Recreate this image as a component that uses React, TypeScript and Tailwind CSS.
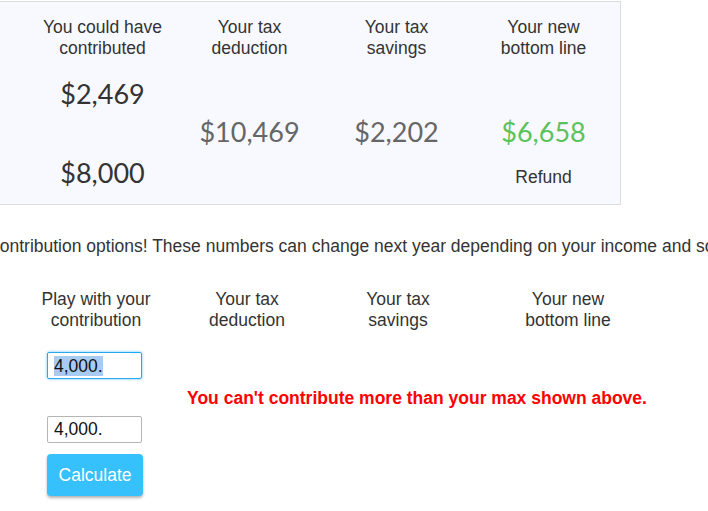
import React from 'react';

const summary = [
  { label: ['You could have', 'contributed'] },
  { label: ['Your tax', 'deduction'], value: '$10,469' },
  { label: ['Your tax', 'savings'], value: '$2,202' },
  { label: ['Your new', 'bottom line'] },
];

const playHeaders = [
  { label: ['Play with your', 'contribution'], w: 'w-[152px]' },
  { label: ['Your tax', 'deduction'], w: 'w-[150px]' },
  { label: ['Your tax', 'savings'], w: 'w-[152px]' },
  { label: ['Your new', 'bottom line'], w: 'w-[188px]' },
];

const Label: React.FC<{ lines: string[] }> = ({ lines }) => (
  <div className="text-center text-[17.5px] leading-[21px] text-[#333]">
    {lines.map((l) => (
      <div key={l} className="whitespace-nowrap">{l}</div>
    ))}
  </div>
);

const money = "font-['Lato',sans-serif] text-[27px] leading-[34px] text-center";

const App: React.FC = () => {
  return (
    <div className="w-[708px] h-[511px] overflow-hidden bg-white font-['Liberation_Sans',Arial,sans-serif] pt-px">
      {/* Summary panel */}
      <div className="-ml-[20px] w-[641px] border border-[#dcdcdc] bg-[#f8f9fe] pl-[48px] pr-[3px] pt-[15px] pb-[14px]">
        <div className="flex">
          {summary.map((col, i) => (
            <div key={i} className="w-[147px] flex flex-col">
              <Label lines={col.label} />
              <div className="mt-[18px] h-[113px] flex flex-col">
                {i === 0 && (
                  <div className="flex flex-col justify-between h-full">
                    <div className={`${money} text-[#333]`}>$2,469</div>
                    <div className={`${money} text-[#333]`}>$8,000</div>
                  </div>
                )}
                {(i === 1 || i === 2) && (
                  <div className={`${money} text-[#666] pt-[38px]`}>{col.value}</div>
                )}
                {i === 3 && (
                  <div className="pt-[38px] flex flex-col items-center">
                    <div className={`${money} text-[#5cc35c]`}>$6,658</div>
                    <div className="mt-[18px] text-[17.5px] leading-[21px] text-[#333]">Refund</div>
                  </div>
                )}
              </div>
            </div>
          ))}
        </div>
      </div>

      {/* Note, clipped by the viewport on both sides */}
      <p className="mt-[31px] -ml-[9px] whitespace-nowrap text-[17.5px] leading-[21px] text-[#333]">
        contribution options! These numbers can change next year depending on your income and so on.
      </p>

      {/* Play area */}
      <div className="ml-[20px] mt-[32px]">
        <div className="flex">
          {playHeaders.map((h) => (
            <div key={h.label[0]} className={h.w}>
              <Label lines={h.label} />
            </div>
          ))}
        </div>

        <div className="flex mt-[21px]">
          <div className="w-[152px] pl-[27px] flex flex-col">
            <div className="w-[95px] h-[27px] border border-[#2aa8ee] rounded-[2px] shadow-[0_0_3px_rgba(42,168,238,0.7)] bg-white pl-[6px] flex items-center text-[17.5px] text-[#111]">
              <span className="bg-[#a8cbf1] leading-[20px]">4,000.</span>
            </div>
            <div className="mt-[37px] w-[95px] h-[27px] border border-[#b5b5b5] rounded-[2px] bg-white pl-[6px] flex items-center text-[17.5px] text-[#111]">
              4,000.
            </div>
          </div>
          <div className="w-[490px] flex items-center justify-center pt-[2px]">
            <span className="whitespace-nowrap font-bold text-[17.5px] text-[#ff0000]">
              You can't contribute more than your max shown above.
            </span>
          </div>
        </div>

        <div className="pl-[27px] mt-[11px]">
          <button className="w-[96px] h-[42px] rounded-[4px] bg-[#36c0fc] text-white text-[17.5px] shadow-[0_2px_3px_rgba(0,0,0,0.3)]">
            Calculate
          </button>
        </div>
      </div>
    </div>
  );
};

export default App;
